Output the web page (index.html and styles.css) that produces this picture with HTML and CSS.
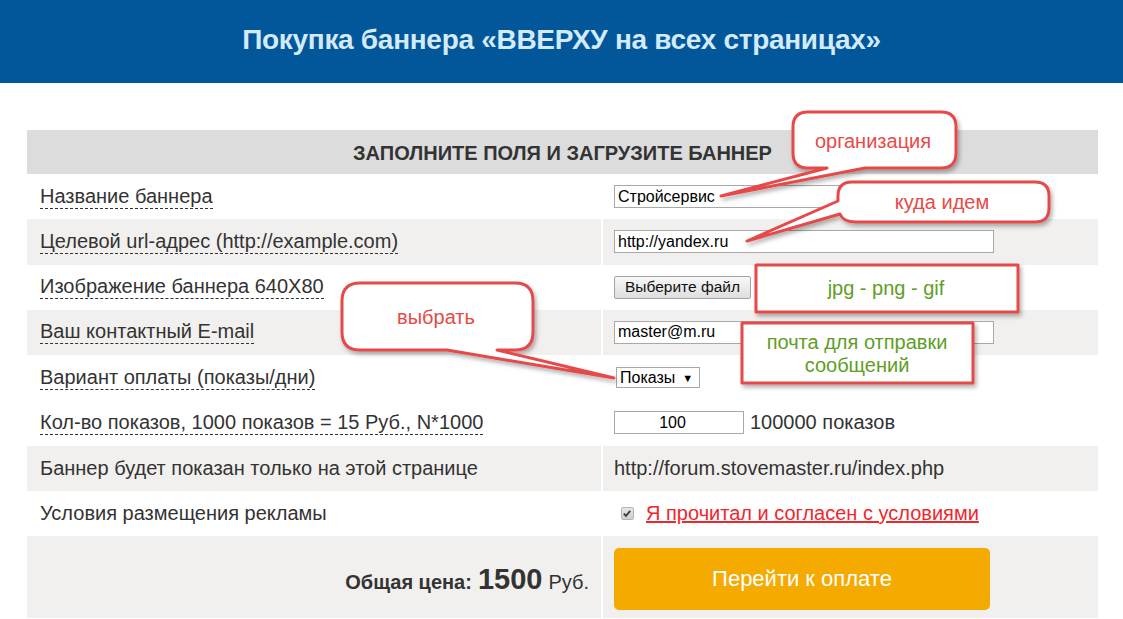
FILE: index.html
```html
<!DOCTYPE html>
<html lang="ru">
<head>
<meta charset="utf-8">
<title>Покупка баннера</title>
<link rel="stylesheet" href="styles.css">
</head>
<body>
<header class="top">
  <h1 class="title">Покупка баннера «ВВЕРХУ на всех страницах»</h1>
</header>
<main class="wrap">
  <div class="form">
    <div class="cell head">ЗАПОЛНИТЕ ПОЛЯ И ЗАГРУЗИТЕ БАННЕР</div>

    <div class="cell lbl"><span class="dash">Название баннера</span></div>
    <div class="cell fld"><input class="text" type="text" value="Стройсервис"></div>

    <div class="cell lbl alt"><span class="dash">Целевой url-адрес (http://example.com)</span></div>
    <div class="cell fld alt"><input class="text" type="text" value="http://yandex.ru"></div>

    <div class="cell lbl"><span class="dash">Изображение баннера 640X80</span></div>
    <div class="cell fld"><button class="file" type="button">Выберите файл</button></div>

    <div class="cell lbl alt"><span class="dash">Ваш контактный E-mail</span></div>
    <div class="cell fld alt"><input class="text" type="text" value="master@m.ru"></div>

    <div class="cell lbl"><span class="dash">Вариант оплаты (показы/дни)</span></div>
    <div class="cell fld"><div class="select"><span>Показы</span><span class="arrow">▼</span></div></div>

    <div class="cell lbl"><span class="dash">Кол-во показов, 1000 показов = 15 Руб., N*1000</span></div>
    <div class="cell fld"><input class="text num" type="text" value="100"><span class="plain">100000 показов</span></div>

    <div class="cell lbl alt">Баннер будет показан только на этой странице</div>
    <div class="cell fld alt"><span class="plain">http://forum.stovemaster.ru/index.php</span></div>

    <div class="cell lbl">Условия размещения рекламы</div>
    <div class="cell fld"><span class="check"><svg width="13" height="13" viewBox="0 0 13 13"><path d="M3 6.6 L5.4 9 L10 3.6" fill="none" stroke="#3a3a3a" stroke-width="2"/></svg></span><a class="agree" href="#">Я прочитал и согласен с условиями</a></div>

    <div class="cell total alt"><b class="tl">Общая цена:</b><b class="sum">1500</b><span class="rub">Руб.</span></div>
    <div class="cell pay alt"><button class="go" type="button">Перейти к оплате</button></div>
  </div>
</main>

<svg class="notes" width="1123" height="619" viewBox="0 0 1123 619">
  <defs>
    <filter id="sh" x="-20%" y="-30%" width="150%" height="180%">
      <feDropShadow dx="2" dy="3" stdDeviation="2" flood-color="#000" flood-opacity="0.3"/>
    </filter>
  </defs>
  <g class="bubble" filter="url(#sh)">
    <path d="M808 112 H941 Q956 112 956 127 V153 Q956 168 941 168 H865 L721 196 L827 168 H808 Q793 168 793 153 V127 Q793 112 808 112 Z"/>
    <path d="M852 182 H1035 Q1049 182 1049 196 V208 Q1049 222 1035 222 H856 Q843 222 840 214 L747 241 L838 201 V196 Q838 182 852 182 Z"/>
    <path d="M360 283 H515 Q533 283 533 301 V332 Q533 350 515 350 H497 L614 378 L447 350 H360 Q342 350 342 332 V301 Q342 283 360 283 Z"/>
    <rect x="756" y="265" width="262" height="47"/>
    <rect x="742" y="323" width="231" height="60"/>
  </g>
  <text class="red" x="873" y="148">организация</text>
  <text class="red" x="942" y="209">куда идем</text>
  <text class="red" x="436" y="324">выбрать</text>
  <text class="green" x="886" y="295">jpg - png - gif</text>
  <text class="green" x="857" y="349">почта для отправки</text>
  <text class="green" x="857" y="372">сообщений</text>
</svg>
</body>
</html>
```
FILE: styles.css
```css
* { box-sizing: border-box; }

html, body {
  margin: 0;
  padding: 0;
}

body {
  position: relative;
  width: 1123px;
  height: 619px;
  overflow: hidden;
  background: #fff;
  font-family: "Liberation Sans", Arial, sans-serif;
  color: #333;
}

.top {
  height: 83px;
  background: #02569a;
  display: flex;
  align-items: center;
  justify-content: center;
}

.title {
  margin: 0;
  padding-bottom: 3px;
  font-size: 28px;
  font-weight: bold;
  color: #d3eaf8;
  letter-spacing: -0.3px;
}

.wrap {
  padding: 47px 0 0 27px;
}

.form {
  display: grid;
  width: 1071px;
  grid-template-columns: 574px 495px;
  grid-template-rows: 44px repeat(8, 45.25px) 82px;
  column-gap: 2px;
}

.cell {
  display: flex;
  align-items: center;
  background: #fff;
  font-size: 20px;
}

.cell.alt { background: #f1f0ef; }

.head {
  grid-column: 1 / -1;
  justify-content: center;
  background: #dcdcdc;
  font-size: 20px;
  font-weight: bold;
  color: #333;
  padding-top: 2px;
}

.lbl {
  padding-left: 13px;
  color: #333;
}

.dash {
  border-bottom: 1px dashed #333;
}

.fld {
  padding-left: 11px;
}

.text {
  width: 380px;
  height: 23px;
  margin: 0;
  padding: 0 3px;
  border: 1px solid #a8a8a8;
  border-radius: 0;
  background: #fff;
  font-family: "Liberation Sans", Arial, sans-serif;
  font-size: 16px;
  color: #000;
  outline: none;
}

.text.num {
  width: 130px;
  padding-right: 16px;
  text-align: center;
  margin-right: 6px;
}

.file {
  width: 137px;
  height: 23px;
  margin: 0;
  padding: 0;
  border: 1px solid #a3a3a3;
  border-radius: 2px;
  background: linear-gradient(#f7f7f7, #dedede);
  font-family: "Liberation Sans", Arial, sans-serif;
  font-size: 15.5px;
  color: #111;
}

.select {
  display: flex;
  align-items: center;
  gap: 7px;
  height: 21px;
  margin-left: 2px;
  padding: 0 6px 0 3px;
  border: 1px solid #a8a8a8;
  background: #fff;
  font-size: 16px;
  color: #000;
}

.select .arrow {
  font-size: 11px;
}

.plain {
  color: #333;
  font-size: 20px;
}

.check {
  display: inline-flex;
  width: 13px;
  height: 13px;
  margin: 0 12px 0 7px;
  border: 1px solid #b5b5b5;
  border-radius: 2px;
  background: linear-gradient(#e6e6e6, #cfcfcf);
}

.check svg {
  margin: -1px 0 0 -1px;
}

.agree {
  color: #f0262c;
  font-size: 20px;
  text-decoration: underline;
}

.total {
  justify-content: flex-end;
  align-items: center;
  padding-right: 12px;
  padding-top: 5px;
  gap: 6px;
  color: #333;
}

.total .tl {
  font-size: 20px;
  margin-top: 6px;
}

.total .sum {
  font-size: 29px;
}

.total .rub {
  font-size: 20px;
  margin-top: 6px;
}

.pay {
  align-items: flex-start;
  padding-left: 11px;
  padding-top: 12px;
}

.go {
  width: 376px;
  height: 62px;
  margin: 0;
  border: none;
  border-radius: 5px;
  background: #f5aa00;
  color: #fff;
  font-family: "Liberation Sans", Arial, sans-serif;
  font-size: 22px;
}

.notes {
  position: absolute;
  left: 0;
  top: 0;
  pointer-events: none;
}

.bubble path,
.bubble rect {
  fill: #fff;
  stroke: #e64a48;
  stroke-width: 3;
  stroke-linejoin: round;
}

.notes text {
  font-family: "Liberation Sans", Arial, sans-serif;
  font-size: 20px;
  text-anchor: middle;
}

.notes .red { fill: #e84a46; }
.notes .green { fill: #5e9e25; }
```
